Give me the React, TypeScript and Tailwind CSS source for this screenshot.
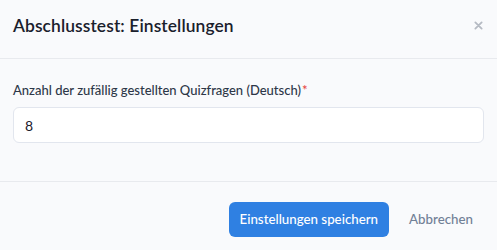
export default function App() {
  return (
    <div
      className="w-[497px] h-[250px] bg-[#f9fafc] text-[#1a202c] flex flex-col overflow-hidden"
      style={{ fontFamily: "Lato, 'Noto Sans', sans-serif" }}
    >
      {/* Header */}
      <div className="h-[59px] shrink-0 border-b border-[#e8eaee] pl-[13px] pr-[14px] flex items-center justify-between">
        <h2 className="text-[17.4px] font-semibold tracking-[0.1px] -mt-[6px]">Abschlusstest: Einstellungen</h2>
        <button className="text-[#b5bac3] -mt-[8px]">
          <svg width="9" height="9" viewBox="0 0 10 10" fill="none" stroke="currentColor" strokeWidth="2" strokeLinecap="round">
            <path d="M1.5 1.5l7 7M8.5 1.5l-7 7" />
          </svg>
        </button>
      </div>

      {/* Body */}
      <div className="h-[123px] shrink-0 border-b border-[#e8eaee] px-[13px] pt-[21px]">
        <label className="block text-[13px] leading-5 font-medium text-[#2d3748]">
          Anzahl der zufällig gestellten Quizfragen (Deutsch)
          <span className="text-[#e53e3e] ml-[1px]">*</span>
        </label>
        <div className="mt-[7px] h-[36px] w-[471px] rounded-[6px] border border-[#e2e6ee] bg-white flex items-center px-[11px] text-[14px] text-[#1a202c]">
          8
        </div>
      </div>

      {/* Footer */}
      <div className="flex-1 flex items-start justify-end pt-[20px] pr-[24px]">
        <button className="h-[35px] px-[11px] rounded-[6px] bg-[#2f80e2] text-white text-[13.3px] font-medium">
          Einstellungen speichern
        </button>
        <button className="h-[35px] ml-[20px] text-[13.3px] font-medium text-[#718096]">
          Abbrechen
        </button>
      </div>
    </div>
  );
}
